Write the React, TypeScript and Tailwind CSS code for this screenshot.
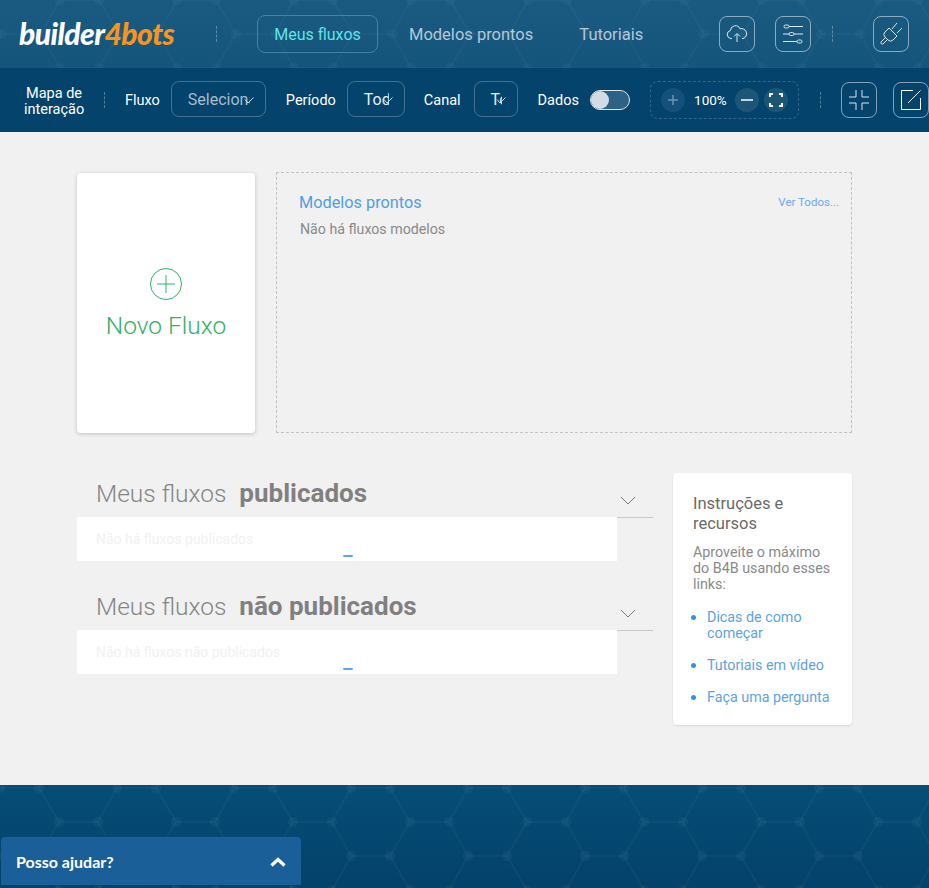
import React from 'react';

const uiFont = "font-['Roboto',sans-serif]";

// hexagon texture behind the header and the footer
const HexTexture = ({ id, offsetX, offsetY, color }: { id: string; offsetX: number; offsetY: number; color: string }) => (
  <svg className="absolute inset-0 w-full h-full pointer-events-none" aria-hidden="true">
    <defs>
      <pattern id={id} width="117" height="68" patternUnits="userSpaceOnUse" patternTransform={`translate(${offsetX} ${offsetY})`}>
        <path d="M0 0H39L59 34H98L117 0M39 68L59 34M98 34L117 68M0 68H39" fill="none" stroke={color} strokeWidth="1.5" />
        <g fill={color}>
          <circle cx="0" cy="0" r="5" />
          <circle cx="39" cy="0" r="5" />
          <circle cx="117" cy="0" r="5" />
          <circle cx="59" cy="34" r="5" />
          <circle cx="98" cy="34" r="5" />
          <circle cx="0" cy="68" r="5" />
          <circle cx="39" cy="68" r="5" />
          <circle cx="117" cy="68" r="5" />
        </g>
      </pattern>
    </defs>
    <rect width="100%" height="100%" fill={`url(#${id})`} />
  </svg>
);

const IconBox = ({ children }: { children: React.ReactNode }) => (
  <button className="w-9 h-9 rounded-lg border border-[#ffffff80] flex items-center justify-center shrink-0">{children}</button>
);

const Dash = () => <div className="h-4 border-l border-dashed border-[#ffffff50] shrink-0" />;

const Tick = () => (
  <svg className="absolute right-[11px] top-[15px] w-[10px] h-[7px]" viewBox="0 0 10 7" fill="none" stroke="#d5dde3" strokeWidth="1">
    <path d="M1 2.500l3 3.500L9.500 .5" />
  </svg>
);

const FakeSelect = ({ label, width, muted }: { label: string; width: string; muted?: boolean }) => (
  <div className={`relative h-9 -mt-[2px] rounded-lg border border-[#ffffff40] overflow-hidden shrink-0 ${width}`}>
    <div className={`h-full pt-[2px] flex items-center whitespace-nowrap overflow-hidden text-[16px] pl-[16px] mr-[15px] ${muted ? 'text-[#a9bccb]' : 'text-[#e8edf1]'}`}>
      {label}
    </div>
    <Tick />
  </div>
);

const Section = ({ bold, empty }: { bold: string; empty: string }) => (
  <section>
    <div className="flex h-[44px]">
      <div className="w-[540px] pl-[19px] pt-[2px] text-[24.500px] leading-[36px] text-[#858585] font-light whitespace-nowrap">
        Meus fluxos<b className="ml-[13px] text-[26px] font-bold text-[#808080]">{bold}</b>
      </div>
      <div className="w-[36px] h-[45px] border-b border-[#c8c8c8] flex justify-end pr-[17px] pt-[23px]">
        <svg width="16" height="9" viewBox="0 0 16 9" fill="none" stroke="#7b7b7b" strokeWidth="1"><path d="M1 1l7 7 7-7" /></svg>
      </div>
    </div>
    <div className="w-[540px] h-[44px] bg-white pl-[19px] pt-[13px] text-[14px] leading-[18px] text-[#f1f1f1] relative">
      {empty}
      <div className="absolute left-[266px] bottom-[4px] w-[10px] h-[2px] rounded-full bg-[#5aa5ec]" />
    </div>
  </section>
);

export default function App() {
  return (
    <div className={`${uiFont} w-[929px] h-[888px] overflow-hidden bg-[#f1f1f1]`}>
      {/* Header */}
      <header className="relative h-[68px] bg-gradient-to-b from-[#1b5a80] to-[#14557c] flex items-center overflow-hidden">
        <HexTexture id="hexTop" offsetX={60} offsetY={0} color="#ffffff07" />
        <div className="relative flex items-center w-full">
          <div className="ml-[19px] w-[197px] -mt-[2px] text-[30px] leading-none font-['Lato',sans-serif] font-black italic tracking-[-0.550px] text-white shrink-0">
            builder<span className="text-[#f7941e]">4bots</span>
          </div>
          <Dash />
          <nav className="flex items-center ml-[40px] text-[16.500px]">
            <a className="w-[121px] h-[38px] pt-px rounded-lg border border-[#3f83a5] flex items-center justify-center text-[16px] text-[#5fe3ea]">Meus fluxos</a>
            <a className="ml-[31px] pt-[2px] text-[#b4c8d6]">Modelos prontos</a>
            <a className="ml-[46px] pt-[2px] text-[#b4c8d6]">Tutoriais</a>
          </nav>
          <div className="ml-auto flex items-center">
            <IconBox>
              <svg width="22" height="18" viewBox="0 0 22 18" fill="none" stroke="#dfe7ec" strokeWidth="1">
                <path d="M6 13.500H5a4 4 0 0 1-.6-7.900A5 5 0 0 1 14 3.800a4.400 4.400 0 0 1 3 9.700h-1" />
                <path d="M11 17V9M8 11.500L11 8.500l3 3" />
              </svg>
            </IconBox>
            <div className="ml-[20px]">
              <IconBox>
                <svg width="22" height="22" viewBox="0 0 22 22" fill="none" stroke="#dfe7ec" strokeWidth="1">
                  <path d="M7 3.500h14M1 11h6M12 11h9M1 18.500h14" />
                  <rect x="2" y="2" width="5" height="3" rx="1.500" />
                  <rect x="7" y="9.500" width="5" height="3" rx="1.500" />
                  <rect x="15" y="17" width="5" height="3" rx="1.500" />
                </svg>
              </IconBox>
            </div>
            <div className="ml-[21px] mr-[40px]"><Dash /></div>
            <div className="mr-[20px]">
              <IconBox>
                <svg width="24" height="24" viewBox="0 0 24 24" fill="none" stroke="#dfe7ec" strokeWidth="1">
                  <path d="M10 6l8 8-4 4a3.500 3.500 0 0 1-5 0l-3-3a3.500 3.500 0 0 1 0-5z" />
                  <path d="M18 1l-5 6M23 6l-5 5" />
                  <path d="M7 15l-5 5a1.500 1.500 0 0 0 2 2l5-5" />
                </svg>
              </IconBox>
            </div>
          </div>
        </div>
      </header>

      {/* Toolbar */}
      <div className="h-[64px] bg-[#04436b] flex items-center text-white text-[14.500px] overflow-hidden">
        <div className="w-[104px] shrink-0 pt-[3px] pl-[24px] pr-[20px] text-center text-[14.500px] leading-[16px] whitespace-nowrap">Mapa de<br />interação</div>
        <Dash />
        <span className="ml-[20px] pt-[2px]">Fluxo</span>
        <div className="ml-[11px]"><FakeSelect label="Selecionar" width="w-[95px]" muted /></div>
        <span className="ml-[20px] pt-[2px]">Período</span>
        <div className="ml-[11px]"><FakeSelect label="Todos" width="w-[58px]" /></div>
        <span className="ml-[19px] pt-[2px]">Canal</span>
        <div className="ml-[13px]"><FakeSelect label="Todos" width="w-[44px]" /></div>
        <span className="ml-[20px] pt-[2px]">Dados</span>
        <div className="ml-[11px] relative w-[40px] h-[20px] rounded-full bg-[#2b6285] border border-[#dfe7ec] shrink-0">
          <div className="absolute left-0 top-0 w-[18px] h-[18px] rounded-full bg-[#d2dce3]" />
        </div>
        <div className="ml-[20px] w-[149px] h-[38px] rounded-lg border border-dashed border-[#ffffff30] flex items-center pl-[10px] shrink-0">
          <div className="w-6 h-6 rounded-full bg-[#14507a] flex items-center justify-center">
            <svg width="12" height="12" viewBox="0 0 12 12" stroke="#6f94ac" strokeWidth="1.500"><path d="M6 1v10M1 6h10" /></svg>
          </div>
          <span className="w-[50px] pl-px text-center text-[13.500px]">100%</span>
          <div className="w-6 h-6 rounded-full bg-[#1d5577] flex items-center justify-center">
            <svg width="12" height="12" viewBox="0 0 12 12" stroke="#ffffff" strokeWidth="1.500"><path d="M0 6h12" /></svg>
          </div>
          <div className="ml-[5px] w-6 h-6 rounded-full bg-[#1d5577] flex items-center justify-center">
            <svg width="14" height="14" viewBox="0 0 14 14" fill="none" stroke="#ffffff" strokeWidth="2"><path d="M1 4V1h3M10 1h3v3M13 10v3h-3M4 13H1v-3" /></svg>
          </div>
        </div>
        <div className="ml-[21px]"><Dash /></div>
        <div className="ml-[20px]">
          <IconBox>
            <svg width="22" height="22" viewBox="0 0 22 22" fill="none" stroke="#dfe7ec" strokeWidth="1"><path d="M8 1v7H1M14 1v7h7M1 14h7v7M21 14h-7v7" /></svg>
          </IconBox>
        </div>
        <div className="ml-[16px] shrink-0">
          <IconBox>
            <svg width="20" height="20" viewBox="0 0 20 20" fill="none" stroke="#ffffff" strokeWidth="1"><path d="M12 .5H.5v19h19V8M7 13L19.500 .5" /></svg>
          </IconBox>
        </div>
      </div>

      {/* Main */}
      <main className="h-[653px] px-[77px] pt-[41px]">
        <div className="flex gap-[21px]">
          <div className="w-[178px] h-[260px] bg-white rounded shadow-[0_1px_4px_rgba(0,0,0,0.2)] flex flex-col items-center pt-[95px] shrink-0">
            <svg width="32" height="32" viewBox="0 0 32 32" fill="none" stroke="#2eb36a" strokeWidth="1">
              <circle cx="16" cy="16" r="15.500" />
              <path d="M16 7v18M7 16h18" />
            </svg>
            <div className="mt-[11px] text-[24.500px] leading-[30px] text-[#36ae66] font-light">Novo Fluxo</div>
          </div>
          <div className="w-[576px] h-[261px] border border-dashed border-[#c4c4c4] pl-[22px] pr-[12px] pt-[20px] -mt-px">
            <div className="flex items-center justify-between">
              <span className="text-[16.300px] text-[#4f9ee8] leading-[20px]">Modelos prontos</span>
              <a className="text-[11.500px] text-[#6ea8f0]">Ver Todos...</a>
            </div>
            <p className="mt-[6px] pl-px text-[14.200px] leading-[20px] text-[#8a8a8a]">Não há fluxos modelos</p>
          </div>
        </div>

        <div className="flex mt-[40px]">
          <div className="w-[596px] shrink-0 flex flex-col gap-[25px]">
            <Section bold="publicados" empty="Não há fluxos publicados" />
            <Section bold="não publicados" empty="Não há fluxos não publicados" />
          </div>
          <aside className="w-[179px] h-[252px] bg-white rounded shadow-[0_1px_2px_rgba(0,0,0,0.12)] pl-[20px] pr-[16px] pt-[21px]">
            <h3 className="text-[16.500px] leading-[20px] text-[#6a6a6a]">Instruções e recursos</h3>
            <p className="mt-[10px] text-[14.300px] leading-[16px] text-[#8a8a8a]">Aproveite o máximo do B4B usando esses links:</p>
            <ul className="mt-[17px] flex flex-col gap-[16px] text-[14.300px] leading-[16px] text-[#5ea3e0]">
              {['Dicas de como começar', 'Tutoriais em vídeo', 'Faça uma pergunta'].map(item => (
                <li key={item} className="relative pl-[14px]">
                  <span className="absolute left-[-2px] top-[6px] w-[5px] h-[5px] rounded-full bg-[#2f95dc]" />
                  {item}
                </li>
              ))}
            </ul>
          </aside>
        </div>
      </main>

      {/* Footer */}
      <footer className="relative h-[103px] bg-gradient-to-b from-[#064d76] to-[#03426a] overflow-hidden">
        <HexTexture id="hexBottom" offsetX={0} offsetY={3} color="#ffffff09" />
        <div className="absolute left-[1px] top-[52px] w-[300px] h-[48px] rounded-t bg-[#1a5f98] flex items-center justify-between pl-[15px] pr-[15px]">
          <span className="pt-[2px] font-['Lato',sans-serif] font-bold text-[16px] text-white">Posso ajudar?</span>
          <svg className="mt-[2px]" width="16" height="10" viewBox="0 0 16 10" fill="none" stroke="#ffffff" strokeWidth="3.200"><path d="M1.500 8.500L8 2.500l6.500 6" /></svg>
        </div>
      </footer>
    </div>
  );
}
